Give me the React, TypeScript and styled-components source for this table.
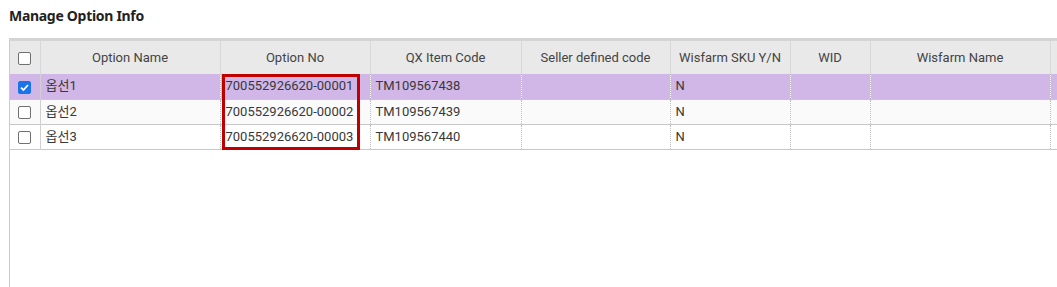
import React, { FC } from "react";
import styled, { createGlobalStyle } from "styled-components";

const GlobalStyle = createGlobalStyle`
  html, body {
    margin: 0;
    padding: 0;
    background: #ffffff;
    overflow: hidden;
  }
  body {
    font-family: Roboto, "Noto Sans CJK KR", sans-serif;
  }
`;

type Column = { key: string; title: string; width: number };

const columns: Column[] = [
  { key: "name", title: "Option Name", width: 180 },
  { key: "no", title: "Option No", width: 150 },
  { key: "qx", title: "QX Item Code", width: 151 },
  { key: "seller", title: "Seller defined code", width: 149 },
  { key: "sku", title: "Wisfarm SKU Y/N", width: 120 },
  { key: "wid", title: "WID", width: 80 },
  { key: "wname", title: "Wisfarm Name", width: 180 },
  { key: "extra", title: "Option Additional Price Setting", width: 190 },
];

const rows: { checked: boolean; cells: Record<string, string> }[] = [
  { checked: true, cells: { name: "옵선1", no: "700552926620-00001", qx: "TM109567438", sku: "N" } },
  { checked: false, cells: { name: "옵선2", no: "700552926620-00002", qx: "TM109567439", sku: "N" } },
  { checked: false, cells: { name: "옵선3", no: "700552926620-00003", qx: "TM109567440", sku: "N" } },
];

const CheckBox: FC<{ checked: boolean }> = ({ checked }) => (
  <Box checked={checked}>
    {checked && (
      <svg width="11" height="11" viewBox="0 0 11 11">
        <path d="M2 5.6 L4.4 8 L9 3" fill="none" stroke="#fff" strokeWidth="1.8" />
      </svg>
    )}
  </Box>
);

const App: FC = () => {
  const total = 30 + columns.reduce((s, c) => s + c.width, 0);
  return (
    <Page>
      <GlobalStyle />
      <Title>Manage Option Info</Title>
      <Grid>
        <Table style={{ width: total }}>
          <colgroup>
            <col style={{ width: 30 }} />
            {columns.map(c => (
              <col key={c.key} style={{ width: c.width }} />
            ))}
          </colgroup>
          <thead>
            <tr>
              <HeadCell>
                <CheckBox checked={false} />
              </HeadCell>
              {columns.map(c => (
                <HeadCell key={c.key}>{c.title}</HeadCell>
              ))}
            </tr>
          </thead>
          <tbody>
            {rows.map((r, i) => (
              <BodyRow key={i} selected={r.checked} odd={i % 2 === 1}>
                <CheckCell>
                  <CheckBox checked={r.checked} />
                </CheckCell>
                {columns.map(c => (
                  <Cell key={c.key}>{r.cells[c.key] || ""}</Cell>
                ))}
              </BodyRow>
            ))}
          </tbody>
        </Table>
        <Highlight />
      </Grid>
    </Page>
  );
};

export default App;

const Page = styled.div`
  padding: 8px 0 0 9px;
  height: 287px;
  box-sizing: border-box;
  overflow: hidden;
`;

const Title = styled.div`
  font-family: "Noto Sans", "Open Sans", sans-serif;
  font-weight: 700;
  font-size: 14px;
  letter-spacing: -0.3px;
  line-height: 16px;
  color: #222;
  height: 30px;
`;

const Grid = styled.div`
  position: relative;
  height: 260px;
  border-top: 3px solid #d4d4d4;
  border-left: 1px solid #cccccc;
  overflow: hidden;
`;

const Table = styled.table`
  table-layout: fixed;
  border-collapse: collapse;
  font-size: 13px;
  color: #383838;
`;

const HeadCell = styled.th`
  height: 33px;
  padding: 0 4px;
  background: #e9e9e9;
  border-right: 1px solid #d8d8d8;
  font-weight: 400;
  color: #444;
  text-align: center;
  white-space: nowrap;
  overflow: hidden;
  &:first-child {
    padding: 0;
  }
`;

const BodyRow = styled.tr<{ selected: boolean; odd: boolean }>`
  height: 25px;
  background: ${p => (p.selected ? "#d1b6e8" : p.odd ? "#fafafa" : "#ffffff")};
  border-bottom: 1px solid #c8c8c8;
`;

const Cell = styled.td`
  padding: 0 5px;
  border-right: 1px dotted #bdbdbd;
  white-space: nowrap;
  overflow: hidden;
  line-height: 24px;
`;

const CheckCell = styled.td`
  padding: 0;
  border-right: 1px solid #d0d0d0;
  text-align: center;
`;

const Box = styled.span<{ checked: boolean }>`
  display: inline-flex;
  align-items: center;
  justify-content: center;
  vertical-align: middle;
  box-sizing: border-box;
  width: 13px;
  height: 13px;
  border-radius: 2px;
  border: 1px solid ${p => (p.checked ? "#1a73e8" : "#707070")};
  background: ${p => (p.checked ? "#1a73e8" : "#ffffff")};
`;

const Highlight = styled.div`
  position: absolute;
  left: 212px;
  top: 33px;
  width: 138px;
  height: 76px;
  border: 3px solid #c00000;
  box-sizing: border-box;
  pointer-events: none;
`;
